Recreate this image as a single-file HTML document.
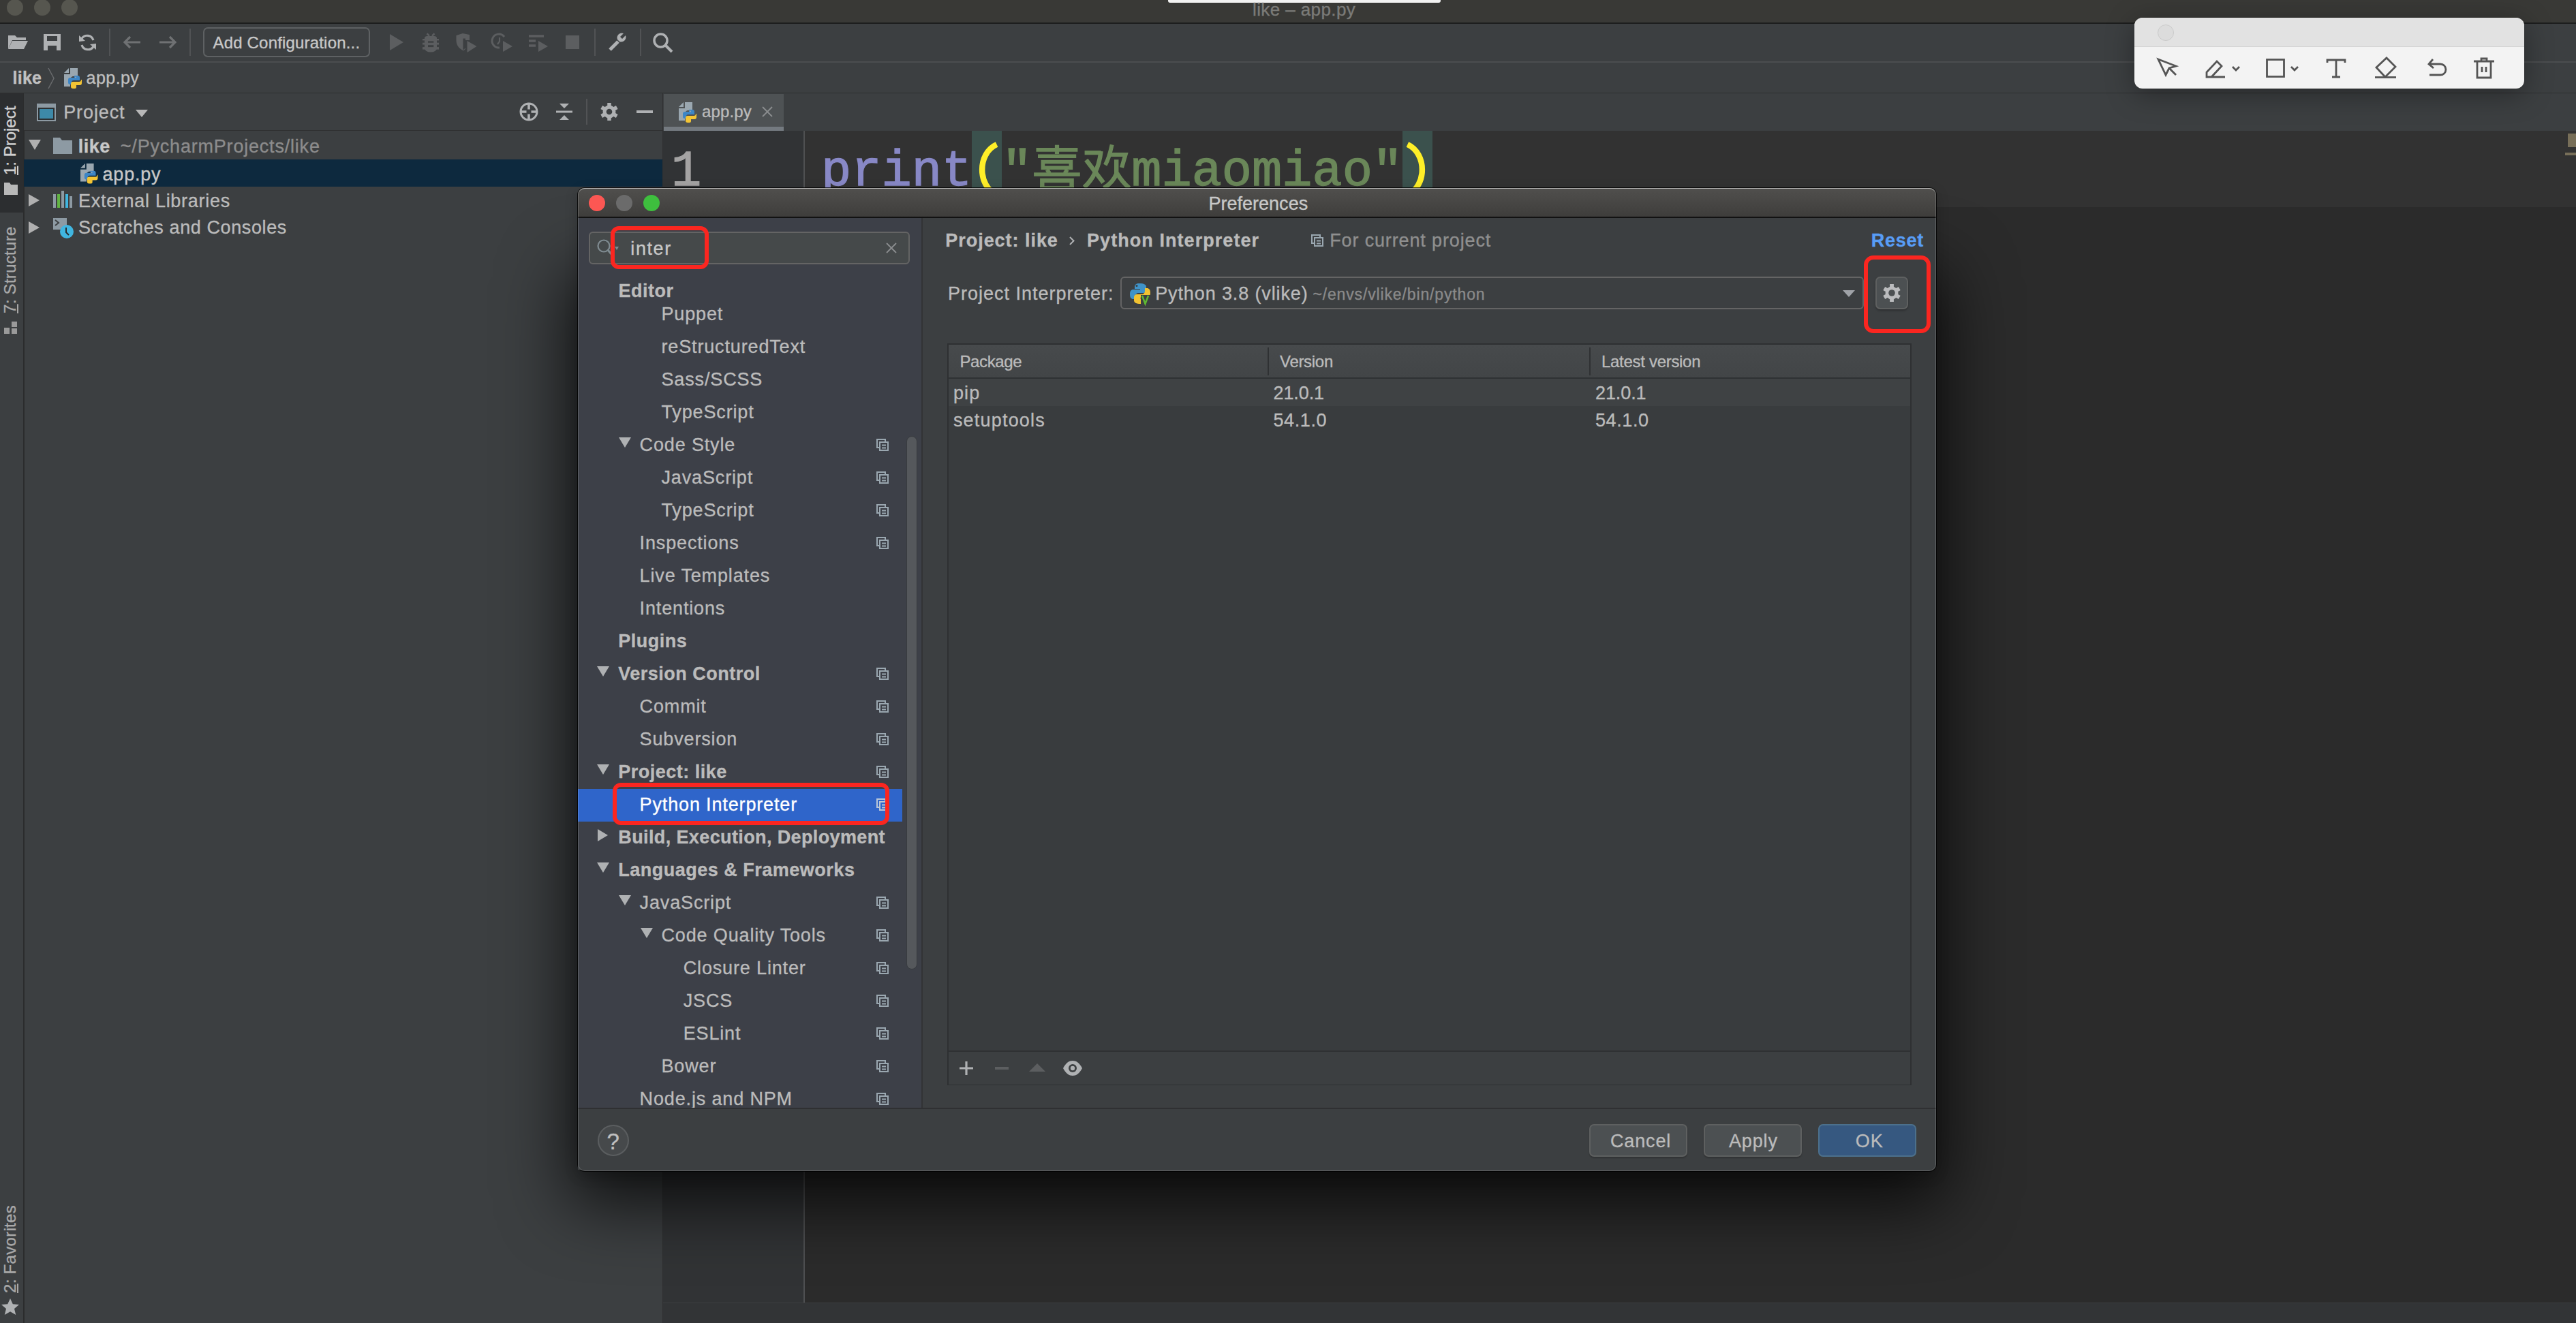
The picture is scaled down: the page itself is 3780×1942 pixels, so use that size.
<!DOCTYPE html>
<html><head><meta charset="utf-8">
<style>
*{margin:0;padding:0;box-sizing:border-box}
html,body{width:3780px;height:1942px;overflow:hidden;background:#3c3f41;font-family:"Liberation Sans",sans-serif;color:#bbbbbb;position:relative}
.a{position:absolute}
.t{position:absolute;white-space:pre;line-height:1;-webkit-text-stroke-width:0.35px}
svg{position:absolute;overflow:visible}
</style></head><body>
<div class="a" style="left:0px;top:0px;width:3780px;height:34px;background:#393936;"></div>
<div class="a" style="left:0px;top:33px;width:3780px;height:2px;background:#1d1e1e;"></div>
<div class="a" style="left:10px;top:-1px;width:24px;height:24px;background:#56564f;border-radius:50%"></div>
<div class="a" style="left:50px;top:-1px;width:24px;height:24px;background:#56564f;border-radius:50%"></div>
<div class="a" style="left:90px;top:-1px;width:24px;height:24px;background:#56564f;border-radius:50%"></div>
<div class="a" style="left:1714px;top:0px;width:400px;height:4px;background:#f2f2f2;border-radius:0 0 3px 3px"></div>
<div class="t" style="left:1838.0px;top:0.99px;font-size:26px;font-weight:400;letter-spacing:0.4px;color:#7b7b78;">like – app.py</div>
<div class="a" style="left:0px;top:35px;width:3780px;height:55px;background:#3c3f41;"></div>
<div class="a" style="left:0px;top:90px;width:3780px;height:2px;background:#4b4d4f;"></div>
<svg style="left:12px;top:50px" width="30" height="24" viewBox="0 0 30 24"><path d="M0 2h10l3 3h13v4H6L0 22z" fill="#afb1b3"/><path d="M6 10h23l-6 12H0z" fill="#afb1b3"/></svg>
<svg style="left:64px;top:50px" width="25" height="24" viewBox="0 0 25 24"><path d="M0 0h25v24H0z M5 3v7h15V3z M6 17v7h13v-7z" fill="#afb1b3" fill-rule="evenodd"/></svg>
<svg style="left:116px;top:50px" width="25" height="25" viewBox="0 0 25 25"><path d="M21 9A9.5 9.5 0 0 0 4 6.5" stroke="#afb1b3" stroke-width="3.2" fill="none"/><path d="M0 2l0 9 9-1z" fill="#afb1b3"/><path d="M4 16a9.5 9.5 0 0 0 17 2.5" stroke="#afb1b3" stroke-width="3.2" fill="none"/><path d="M25 23l0-9-9 1z" fill="#afb1b3"/></svg>
<div class="a" style="left:160px;top:42px;width:2px;height:40px;background:#515355;"></div>
<svg style="left:180px;top:52px" width="27" height="20" viewBox="0 0 27 20"><path d="M26 10H3M11 2L3 10l8 8" stroke="#6f7173" stroke-width="3.2" fill="none"/></svg>
<svg style="left:234px;top:52px" width="27" height="20" viewBox="0 0 27 20"><path d="M0 10h23M15 2l8 8-8 8" stroke="#6f7173" stroke-width="3.2" fill="none"/></svg>
<div class="a" style="left:278px;top:42px;width:2px;height:40px;background:#515355;"></div>
<div class="a" style="left:298px;top:40px;width:245px;height:44px;background:transparent;border:2px solid #5e6163;border-radius:7px"></div>
<div class="t" style="left:312.5px;top:50.68px;font-size:24px;font-weight:400;letter-spacing:0.18px;color:#c8c8c8;">Add Configuration...</div>
<svg style="left:572px;top:50px" width="20" height="24" viewBox="0 0 20 24"><path d="M0 0l20 12L0 24z" fill="#5c5e60"/></svg>
<svg style="left:619px;top:48px" width="26" height="30" viewBox="0 0 26 30"><path d="M7.5 1.3L11 4.6M18.5 1.3L15 4.6" stroke="#5c5e60" stroke-width="2.6"/><path d="M4 8a4 3 0 0 1 4-3h10a4 3 0 0 1 4 3v15a9 5.5 0 0 1-18 0z" fill="#5c5e60"/><rect x="1" y="9" width="24" height="2.4" fill="#5c5e60"/><rect x="1" y="14.7" width="24" height="2.9" fill="#5c5e60"/><rect x="1" y="21.1" width="24" height="3.5" fill="#5c5e60"/><rect x="9" y="12.4" width="8.3" height="2.3" fill="#3c3f41"/><rect x="9" y="18.2" width="8.3" height="2.9" fill="#3c3f41"/></svg>
<svg style="left:669px;top:49px" width="31" height="29" viewBox="0 0 31 29"><path d="M0.5 3L10 0l10 2v8h-6v13l-3 2.5C4 22 0.5 17 0.5 10z" fill="#5c5e60"/><path d="M10.5 7.5h3.5v14l-3.5 3z" fill="#3c3f41"/><path d="M16.5 11l14 8-14 9z" fill="#5c5e60"/></svg>
<svg style="left:722px;top:48px" width="30" height="28" viewBox="0 0 30 28"><path d="M18 6A10 10 0 1 0 11 22" stroke="#5c5e60" stroke-width="3" fill="none"/><path d="M11 7v6l-3 4" stroke="#5c5e60" stroke-width="2.2" fill="none"/><path d="M16 12l14 8-14 8z" fill="#5c5e60"/></svg>
<svg style="left:776px;top:48px" width="28" height="28" viewBox="0 0 28 28"><path d="M0 5h22M0 12h10M0 19h10" stroke="#5c5e60" stroke-width="3.5"/><path d="M14 12l14 8-14 8z" fill="#5c5e60"/></svg>
<div class="a" style="left:830px;top:52px;width:20px;height:20px;background:#5c5e60;"></div>
<div class="a" style="left:872px;top:42px;width:2px;height:40px;background:#515355;"></div>
<svg style="left:893px;top:48px" width="28" height="28" viewBox="0 0 28 28"><path d="M2 25L14 13" stroke="#afb1b3" stroke-width="5"/><path d="M22 1a7 7 0 0 0-9 9l3 3a7 7 0 0 0 9-9l-5 5-3-3z" fill="#afb1b3"/></svg>
<div class="a" style="left:939px;top:42px;width:2px;height:40px;background:#515355;"></div>
<svg style="left:958px;top:48px" width="29" height="29" viewBox="0 0 29 29"><circle cx="11.5" cy="11.5" r="9.5" stroke="#afb1b3" stroke-width="3.5" fill="none"/><path d="M18 18l10 10" stroke="#afb1b3" stroke-width="4"/></svg>
<div class="a" style="left:0px;top:92px;width:3780px;height:44px;background:#3c3f41;"></div>
<div class="a" style="left:0px;top:136px;width:3780px;height:1px;background:#2e2f30;"></div>
<div class="t" style="left:18.4px;top:102.14px;font-size:25px;font-weight:700;letter-spacing:0.3px;color:#c0c0c0;">like</div>
<svg style="left:70px;top:100px" width="10" height="30" viewBox="0 0 10 30"><path d="M1 0l8 15-8 15" stroke="#6a6c6e" stroke-width="1.5" fill="none"/></svg>
<svg style="left:94px;top:100px" width="28" height="31" viewBox="0 0 28 31"><g transform="scale(1)"><path d="M0 7L7 0v7z" fill="#9aa7b0"/><path d="M9 0h11v12h-6a5 5 0 0 0-5 5v10H0V9h9z" fill="#9aa7b0"/><path d="M15 11h5a3 3 0 0 1 3 3v4h-9a3 3 0 0 0-3 3v3H9a3 3 0 0 1-3-3v-4a3 3 0 0 1 3-3h6z" fill="#3d86c6"/><circle cx="17" cy="13.5" r="1" fill="#9aa7b0"/><path d="M26 17v5a3 3 0 0 1-3 3h-5v3a2 2 0 0 1-2 2h-3a3 3 0 0 1-3-3v-4a3 3 0 0 1 3-3h9a3 3 0 0 0 3-3z" fill="#f4c534"/></g></svg>
<div class="t" style="left:126.6px;top:102.14px;font-size:25px;font-weight:400;letter-spacing:0.44px;color:#c0c0c0;">app.py</div>
<div class="a" style="left:0px;top:137px;width:35px;height:1775px;background:#3c3f41;"></div>
<div class="a" style="left:34px;top:137px;width:2px;height:1805px;background:#2b2c2d;"></div>
<div class="a" style="left:0px;top:137px;width:34px;height:175px;background:#2c2e30;"></div>
<div class="t" style="left:3px;top:257px;transform:rotate(-90deg);transform-origin:0 0;font-size:24px;letter-spacing:0px;color:#d0d0d0"><u style="text-decoration-thickness:1.5px;text-underline-offset:2px">1</u>: Project</div>
<svg style="left:6px;top:268px" width="20" height="18" viewBox="0 0 20 18"><path d="M0 0h8l2 3h10v15H0z" fill="#b8b8b8"/></svg>
<div class="t" style="left:3px;top:460px;transform:rotate(-90deg);transform-origin:0 0;font-size:24px;letter-spacing:0.3px;color:#a8a8a8"><u style="text-decoration-thickness:1.5px;text-underline-offset:2px">7</u>: Structure</div>
<svg style="left:6px;top:472px" width="20" height="18" viewBox="0 0 20 18"><rect x="0" y="9" width="8" height="9" fill="#9a9a9a"/><rect x="11" y="0" width="8" height="8" fill="#9a9a9a"/><rect x="11" y="10" width="8" height="8" fill="#9a9a9a"/></svg>
<div class="t" style="left:3px;top:1898px;transform:rotate(-90deg);transform-origin:0 0;font-size:24px;letter-spacing:0.3px;color:#a8a8a8"><u style="text-decoration-thickness:1.5px;text-underline-offset:2px">2</u>: Favorites</div>
<svg style="left:2px;top:1906px" width="26" height="24" viewBox="0 0 26 24"><path d="M13 0l3.8 8.3 9.2.8-7 6 2.2 8.9L13 19.3 4.8 24 7 15.1 0 9.1l9.2-.8z" fill="#afb1b3"/></svg>
<div class="a" style="left:35px;top:137px;width:937px;height:54px;background:#3c3f41;"></div>
<div class="a" style="left:35px;top:191px;width:937px;height:1px;background:#2f3031;"></div>
<svg style="left:54px;top:152px" width="28" height="26" viewBox="0 0 28 26"><rect x="0" y="0" width="28" height="26" fill="#8d9aa3"/><rect x="2" y="6" width="24" height="18" fill="#2d3032"/><rect x="4" y="8" width="20" height="14" fill="#3d89a8"/></svg>
<div class="t" style="left:93.2px;top:151.84px;font-size:27px;font-weight:400;letter-spacing:0.9px;color:#bbbbbb;">Project</div>
<svg style="left:199px;top:161px" width="18" height="11" viewBox="0 0 18 11"><path d="M0 0h18L9 11z" fill="#b8b8b8"/></svg>
<svg style="left:762px;top:150px" width="28" height="28" viewBox="0 0 28 28"><circle cx="14" cy="14" r="12" stroke="#afb1b3" stroke-width="3" fill="none"/><path d="M14 1v9.5M14 17.5v9.5M1 14h9.5M17.5 14h9.5" stroke="#afb1b3" stroke-width="3.6"/></svg>
<svg style="left:816px;top:152px" width="24" height="24" viewBox="0 0 24 24"><path d="M0 12h24" stroke="#afb1b3" stroke-width="3"/><path d="M5 0h14l-7 7z M5 24h14l-7-7z" fill="#afb1b3"/></svg>
<div class="a" style="left:860px;top:145px;width:2px;height:38px;background:#515355;"></div>
<svg style="left:881px;top:151px" width="26" height="26" viewBox="0 0 26 26"><circle cx="13" cy="13" r="9.5" fill="#afb1b3"/><rect x="-2.75" y="-13" width="5.5" height="13" fill="#afb1b3" transform="translate(13 13) rotate(0)"/><rect x="-2.75" y="-13" width="5.5" height="13" fill="#afb1b3" transform="translate(13 13) rotate(60)"/><rect x="-2.75" y="-13" width="5.5" height="13" fill="#afb1b3" transform="translate(13 13) rotate(120)"/><rect x="-2.75" y="-13" width="5.5" height="13" fill="#afb1b3" transform="translate(13 13) rotate(180)"/><rect x="-2.75" y="-13" width="5.5" height="13" fill="#afb1b3" transform="translate(13 13) rotate(240)"/><rect x="-2.75" y="-13" width="5.5" height="13" fill="#afb1b3" transform="translate(13 13) rotate(300)"/><circle cx="13" cy="13" r="4.3" fill="#3c3f41"/></svg>
<div class="a" style="left:934px;top:162px;width:24px;height:4px;background:#afb1b3;"></div>
<div class="a" style="left:972px;top:137px;width:1px;height:1805px;background:#2f3031;"></div>
<div class="a" style="left:35px;top:234px;width:937px;height:40px;background:#0d293e;"></div>
<svg style="left:42px;top:205px" width="18" height="15" viewBox="0 0 18 15"><path d="M0 0h18L9 15z" fill="#b0b0b0"/></svg>
<svg style="left:78px;top:202px" width="28" height="24" viewBox="0 0 28 24"><path d="M0 0h10l3 4h15v20H0z" fill="#8d9aa3"/></svg>
<div class="t" style="left:114.7px;top:201.84px;font-size:27px;font-weight:700;letter-spacing:0.5px;color:#c8c8c8;">like</div>
<div class="t" style="left:176.8px;top:201.84px;font-size:27px;font-weight:400;letter-spacing:0.8px;color:#8c8c8c;">~/PycharmProjects/like</div>
<svg style="left:118px;top:240px" width="27" height="30" viewBox="0 0 27 30"><g transform="scale(0.98)"><path d="M0 7L7 0v7z" fill="#9aa7b0"/><path d="M9 0h11v12h-6a5 5 0 0 0-5 5v10H0V9h9z" fill="#9aa7b0"/><path d="M15 11h5a3 3 0 0 1 3 3v4h-9a3 3 0 0 0-3 3v3H9a3 3 0 0 1-3-3v-4a3 3 0 0 1 3-3h6z" fill="#3d86c6"/><circle cx="17" cy="13.5" r="1" fill="#9aa7b0"/><path d="M26 17v5a3 3 0 0 1-3 3h-5v3a2 2 0 0 1-2 2h-3a3 3 0 0 1-3-3v-4a3 3 0 0 1 3-3h9a3 3 0 0 0 3-3z" fill="#f4c534"/></g></svg>
<div class="t" style="left:150.5px;top:242.84px;font-size:27px;font-weight:400;letter-spacing:0.8px;color:#c8c8c8;">app.py</div>
<svg style="left:42px;top:285px" width="16" height="18" viewBox="0 0 16 18"><path d="M0 0l16 9L0 18z" fill="#b0b0b0"/></svg>
<svg style="left:78px;top:280px" width="28" height="25" viewBox="0 0 28 25"><rect x="0" y="5" width="4" height="20" fill="#8d9aa3"/><rect x="6" y="5" width="4" height="20" fill="#62b543"/><rect x="12" y="0" width="4" height="25" fill="#8d9aa3"/><rect x="18" y="5" width="4" height="20" fill="#40b6e0"/><rect x="24" y="8" width="4" height="17" fill="#8d9aa3"/></svg>
<div class="t" style="left:115.0px;top:281.84px;font-size:27px;font-weight:400;letter-spacing:0.71px;color:#bbbbbb;">External Libraries</div>
<svg style="left:42px;top:325px" width="16" height="18" viewBox="0 0 16 18"><path d="M0 0l16 9L0 18z" fill="#b0b0b0"/></svg>
<svg style="left:78px;top:320px" width="32" height="32" viewBox="0 0 32 32"><rect x="0" y="0" width="20" height="17" fill="#8d9aa3"/><path d="M3 3l5 4-5 4" stroke="#3c3f41" stroke-width="2" fill="none"/><circle cx="20" cy="20" r="10" fill="#40b6e0"/><path d="M19 14v7l4 4" stroke="#2b2b2b" stroke-width="2" fill="none"/></svg>
<div class="t" style="left:115.0px;top:321.44px;font-size:27px;font-weight:400;letter-spacing:0.6px;color:#bbbbbb;">Scratches and Consoles</div>
<div class="a" style="left:973px;top:137px;width:2807px;height:55px;background:#3c3f41;"></div>
<div class="a" style="left:974px;top:138px;width:176px;height:48px;background:#4e5254;"></div>
<div class="a" style="left:974px;top:186px;width:176px;height:6px;background:#747a80;"></div>
<svg style="left:996px;top:150px" width="28" height="31" viewBox="0 0 28 31"><g transform="scale(1)"><path d="M0 7L7 0v7z" fill="#9aa7b0"/><path d="M9 0h11v12h-6a5 5 0 0 0-5 5v10H0V9h9z" fill="#9aa7b0"/><path d="M15 11h5a3 3 0 0 1 3 3v4h-9a3 3 0 0 0-3 3v3H9a3 3 0 0 1-3-3v-4a3 3 0 0 1 3-3h6z" fill="#3d86c6"/><circle cx="17" cy="13.5" r="1" fill="#9aa7b0"/><path d="M26 17v5a3 3 0 0 1-3 3h-5v3a2 2 0 0 1-2 2h-3a3 3 0 0 1-3-3v-4a3 3 0 0 1 3-3h9a3 3 0 0 0 3-3z" fill="#f4c534"/></g></svg>
<div class="t" style="left:1030.0px;top:152.38px;font-size:24px;font-weight:400;letter-spacing:0.14px;color:#bbbbbb;">app.py</div>
<svg style="left:1119px;top:157px" width="14" height="14" viewBox="0 0 14 14"><path d="M0 0l14 14M14 0L0 14" stroke="#8b8d8f" stroke-width="1.8"/></svg>
<div class="a" style="left:973px;top:192px;width:207px;height:1720px;background:#313335;"></div>
<div class="a" style="left:1180px;top:192px;width:2600px;height:1720px;background:#2b2b2b;"></div>
<div class="a" style="left:1181px;top:192px;width:2599px;height:112px;background:#323232;"></div>
<div class="a" style="left:1179px;top:192px;width:2px;height:1720px;background:#4f5052;"></div>
<div class="a" style="left:973px;top:1912px;width:2807px;height:30px;background:#323436;"></div>
<div class="a" style="left:973px;top:1912px;width:2807px;height:1px;background:#3d3f41;"></div>
<div class="a" style="left:3768px;top:196px;width:12px;height:20px;background:#776e58;"></div>
<div class="a" style="left:3764px;top:224px;width:16px;height:4px;background:#776e58;"></div>
<div class="a" style="left:1426px;top:192px;width:44px;height:84px;background:#3b514d;"></div>
<div class="a" style="left:2058px;top:192px;width:44px;height:84px;background:#3b514d;"></div>
<div class="t" style="left:1205px;top:215.6px;font-family:&quot;Liberation Mono&quot;,monospace;font-size:73.7px;letter-spacing:0px;color:#8888c6;-webkit-text-stroke:1.4px #8888c6">print</div>
<svg style="left:1426px;top:200px" width="44" height="76" viewBox="0 0 44 76"><path d="M36.6 12C8 25 8 73 36.6 86" stroke="#ffef28" stroke-width="8.5" fill="none"/></svg>
<div class="t" style="left:1470.2px;top:215.6px;font-family:&quot;Liberation Mono&quot;,monospace;font-size:73.7px;letter-spacing:0px;color:#6a8759;-webkit-text-stroke:1.4px #6a8759">"</div>
<div class="t" style="left:1660.2px;top:215.6px;font-family:&quot;Liberation Mono&quot;,monospace;font-size:73.7px;letter-spacing:0px;color:#6a8759;-webkit-text-stroke:1.4px #6a8759">miaomiao"</div>
<svg style="left:2058px;top:200px" width="44" height="76" viewBox="0 0 44 76"><path d="M7.4 12C36 25 36 73 7.4 86" stroke="#ffef28" stroke-width="8.5" fill="none"/></svg>
<div class="t" style="left:985px;top:215.6px;font-family:&quot;Liberation Mono&quot;,monospace;font-size:73.7px;letter-spacing:0px;color:#a4a3a3;-webkit-text-stroke:1.4px #a4a3a3">1</div>
<svg style="left:1505px;top:200px" width="160" height="76" viewBox="0 0 160 76"><g stroke="#6a8759" fill="none" stroke-linecap="butt"><path d="M46 12.7V26" stroke-width="6.2"/><path d="M15.5 19.9H76.4M18 29.2H74.2" stroke-width="5.6"/><rect x="25.4" y="37.6" width="41" height="8.7" stroke-width="5.6"/><path d="M31.5 49l3.5 5.5M61 49l-3.5 5.5" stroke-width="6"/><path d="M12.1 56H79.8" stroke-width="5.4"/><path d="M24.3 84V65H67.6V84" stroke-width="6.4"/><path d="M21 75.8H71" stroke-width="5"/><path d="M86.6 24.2H110.5" stroke-width="6.2"/><path d="M110.5 22C108 45 100 62 86 75" stroke-width="6.5"/><path d="M88.8 34.8L114 68" stroke-width="6.5"/><path d="M126.7 12.4C124 25 121 35 116.8 42.2" stroke-width="6"/><path d="M124.2 27H146.5L141 46" stroke-width="6.2"/><path d="M133.2 34.2V55C130 64 123 71 114.9 76" stroke-width="6.5"/><path d="M134 54C139 63 145 70 152 76" stroke-width="6.5"/></g></svg>
<div class="a" style="left:853px;top:386px;width:1983px;height:1333px;border-radius:10px;box-shadow:0 30px 100px 18px rgba(0,0,0,.75)"></div>
<div class="a" style="left:848px;top:276px;width:1993px;height:1443px;background:#3c3f41;border-radius:10px;box-shadow:0 0 0 1px rgba(0,0,0,.8), 0 6px 20px rgba(0,0,0,.2);overflow:hidden"></div>
<div class="a" style="left:848px;top:276px;width:1993px;height:43px;background:linear-gradient(#504f4d,#3e3d3b);border-radius:10px 10px 0 0;border-top:1.5px solid #8d8c8a"></div>
<div class="a" style="left:848px;top:318px;width:1993px;height:2px;background:#121212;"></div>
<div class="a" style="left:864px;top:286px;width:24px;height:24px;background:#fc5753;border-radius:50%"></div>
<div class="a" style="left:904px;top:286px;width:24px;height:24px;background:#6b6b6b;border-radius:50%"></div>
<div class="a" style="left:944px;top:286px;width:24px;height:24px;background:#3ebf3e;border-radius:50%"></div>
<div class="t" style="left:1773.4px;top:285.94px;font-size:27px;font-weight:400;letter-spacing:0.02px;color:#c8c8c8;">Preferences</div>
<div class="a" style="left:848px;top:320px;width:504px;height:1306px;background:#3d4048;"></div>
<div class="a" style="left:1352px;top:320px;width:2px;height:1306px;background:#323335;"></div>
<div class="a" style="left:848px;top:1626px;width:1993px;height:2px;background:#2f3032;"></div>
<div class="a" style="left:864px;top:340px;width:471px;height:48px;background:#45494a;border:2px solid #646464;border-radius:6px"></div>
<svg style="left:876px;top:351px" width="34" height="24" viewBox="0 0 34 24"><circle cx="10" cy="10" r="8.5" stroke="#7f8b91" stroke-width="2.2" fill="none"/><path d="M16 16l5 6" stroke="#7f8b91" stroke-width="3"/><path d="M26 11h6l-3 5z" fill="#7f8b91"/></svg>
<div class="t" style="left:925.3px;top:352.04px;font-size:27px;font-weight:400;letter-spacing:1.6px;color:#c8c8c8;">inter</div>
<svg style="left:1301px;top:357px" width="14" height="14" viewBox="0 0 14 14"><path d="M0 0l14 14M14 0L0 14" stroke="#8b8d8f" stroke-width="1.8"/></svg>
<div class="t" style="left:907.5px;top:414.14px;font-size:27px;font-weight:700;letter-spacing:0.52px;color:#bbbbbb;">Editor</div>
<div class="a" style="left:848px;top:1158px;width:476px;height:48px;background:#2f65ca;"></div>
<div class="t" style="left:970.5px;top:448.14px;font-size:27px;font-weight:400;letter-spacing:0.85px;color:#bbbbbb;">Puppet</div>
<div class="t" style="left:970.5px;top:496.14px;font-size:27px;font-weight:400;letter-spacing:0.85px;color:#bbbbbb;">reStructuredText</div>
<div class="t" style="left:970.5px;top:544.14px;font-size:27px;font-weight:400;letter-spacing:0.85px;color:#bbbbbb;">Sass/SCSS</div>
<div class="t" style="left:970.5px;top:592.14px;font-size:27px;font-weight:400;letter-spacing:0.85px;color:#bbbbbb;">TypeScript</div>
<div class="t" style="left:938.6px;top:640.14px;font-size:27px;font-weight:400;letter-spacing:0.85px;color:#bbbbbb;">Code Style</div>
<svg style="left:908px;top:642px" width="18" height="15" viewBox="0 0 18 15"><path d="M0 0h18L9 15z" fill="#afb1b3"/></svg>
<svg style="left:1286px;top:644px" width="18" height="18" viewBox="0 0 18 18"><rect x="1" y="1" width="12" height="12" stroke="#9aa7b0" stroke-width="2" fill="none"/><rect x="5" y="5" width="12" height="12" stroke="#9aa7b0" stroke-width="2" fill="#3d4048"/><path d="M8 9.5h6M8 13.5h6" stroke="#9aa7b0" stroke-width="2"/></svg>
<div class="t" style="left:970.5px;top:688.14px;font-size:27px;font-weight:400;letter-spacing:0.85px;color:#bbbbbb;">JavaScript</div>
<svg style="left:1286px;top:692px" width="18" height="18" viewBox="0 0 18 18"><rect x="1" y="1" width="12" height="12" stroke="#9aa7b0" stroke-width="2" fill="none"/><rect x="5" y="5" width="12" height="12" stroke="#9aa7b0" stroke-width="2" fill="#3d4048"/><path d="M8 9.5h6M8 13.5h6" stroke="#9aa7b0" stroke-width="2"/></svg>
<div class="t" style="left:970.5px;top:736.14px;font-size:27px;font-weight:400;letter-spacing:0.85px;color:#bbbbbb;">TypeScript</div>
<svg style="left:1286px;top:740px" width="18" height="18" viewBox="0 0 18 18"><rect x="1" y="1" width="12" height="12" stroke="#9aa7b0" stroke-width="2" fill="none"/><rect x="5" y="5" width="12" height="12" stroke="#9aa7b0" stroke-width="2" fill="#3d4048"/><path d="M8 9.5h6M8 13.5h6" stroke="#9aa7b0" stroke-width="2"/></svg>
<div class="t" style="left:938.6px;top:784.14px;font-size:27px;font-weight:400;letter-spacing:0.85px;color:#bbbbbb;">Inspections</div>
<svg style="left:1286px;top:788px" width="18" height="18" viewBox="0 0 18 18"><rect x="1" y="1" width="12" height="12" stroke="#9aa7b0" stroke-width="2" fill="none"/><rect x="5" y="5" width="12" height="12" stroke="#9aa7b0" stroke-width="2" fill="#3d4048"/><path d="M8 9.5h6M8 13.5h6" stroke="#9aa7b0" stroke-width="2"/></svg>
<div class="t" style="left:938.6px;top:832.14px;font-size:27px;font-weight:400;letter-spacing:0.85px;color:#bbbbbb;">Live Templates</div>
<div class="t" style="left:938.6px;top:880.14px;font-size:27px;font-weight:400;letter-spacing:0.85px;color:#bbbbbb;">Intentions</div>
<div class="t" style="left:907.3px;top:928.14px;font-size:27px;font-weight:700;letter-spacing:0.5px;color:#bbbbbb;">Plugins</div>
<div class="t" style="left:907.3px;top:976.14px;font-size:27px;font-weight:700;letter-spacing:0.5px;color:#bbbbbb;">Version Control</div>
<svg style="left:876px;top:978px" width="18" height="15" viewBox="0 0 18 15"><path d="M0 0h18L9 15z" fill="#afb1b3"/></svg>
<svg style="left:1286px;top:980px" width="18" height="18" viewBox="0 0 18 18"><rect x="1" y="1" width="12" height="12" stroke="#9aa7b0" stroke-width="2" fill="none"/><rect x="5" y="5" width="12" height="12" stroke="#9aa7b0" stroke-width="2" fill="#3d4048"/><path d="M8 9.5h6M8 13.5h6" stroke="#9aa7b0" stroke-width="2"/></svg>
<div class="t" style="left:938.6px;top:1024.14px;font-size:27px;font-weight:400;letter-spacing:0.85px;color:#bbbbbb;">Commit</div>
<svg style="left:1286px;top:1028px" width="18" height="18" viewBox="0 0 18 18"><rect x="1" y="1" width="12" height="12" stroke="#9aa7b0" stroke-width="2" fill="none"/><rect x="5" y="5" width="12" height="12" stroke="#9aa7b0" stroke-width="2" fill="#3d4048"/><path d="M8 9.5h6M8 13.5h6" stroke="#9aa7b0" stroke-width="2"/></svg>
<div class="t" style="left:938.6px;top:1072.14px;font-size:27px;font-weight:400;letter-spacing:0.85px;color:#bbbbbb;">Subversion</div>
<svg style="left:1286px;top:1076px" width="18" height="18" viewBox="0 0 18 18"><rect x="1" y="1" width="12" height="12" stroke="#9aa7b0" stroke-width="2" fill="none"/><rect x="5" y="5" width="12" height="12" stroke="#9aa7b0" stroke-width="2" fill="#3d4048"/><path d="M8 9.5h6M8 13.5h6" stroke="#9aa7b0" stroke-width="2"/></svg>
<div class="t" style="left:907.3px;top:1120.14px;font-size:27px;font-weight:700;letter-spacing:0.5px;color:#bbbbbb;">Project: like</div>
<svg style="left:876px;top:1122px" width="18" height="15" viewBox="0 0 18 15"><path d="M0 0h18L9 15z" fill="#afb1b3"/></svg>
<svg style="left:1286px;top:1124px" width="18" height="18" viewBox="0 0 18 18"><rect x="1" y="1" width="12" height="12" stroke="#9aa7b0" stroke-width="2" fill="none"/><rect x="5" y="5" width="12" height="12" stroke="#9aa7b0" stroke-width="2" fill="#3d4048"/><path d="M8 9.5h6M8 13.5h6" stroke="#9aa7b0" stroke-width="2"/></svg>
<div class="t" style="left:938.6px;top:1168.14px;font-size:27px;font-weight:400;letter-spacing:0.85px;color:#ffffff;">Python Interpreter</div>
<svg style="left:1286px;top:1172px" width="18" height="18" viewBox="0 0 18 18"><rect x="1" y="1" width="12" height="12" stroke="#b9c6d8" stroke-width="2" fill="none"/><rect x="5" y="5" width="12" height="12" stroke="#b9c6d8" stroke-width="2" fill="#2f65ca"/><path d="M8 9.5h6M8 13.5h6" stroke="#b9c6d8" stroke-width="2"/></svg>
<div class="t" style="left:907.3px;top:1216.14px;font-size:27px;font-weight:700;letter-spacing:0.38px;color:#bbbbbb;">Build, Execution, Deployment</div>
<svg style="left:877px;top:1217px" width="15" height="18" viewBox="0 0 15 18"><path d="M0 0l15 9L0 18z" fill="#afb1b3"/></svg>
<div class="t" style="left:907.3px;top:1264.14px;font-size:27px;font-weight:700;letter-spacing:0.5px;color:#bbbbbb;">Languages &amp; Frameworks</div>
<svg style="left:876px;top:1266px" width="18" height="15" viewBox="0 0 18 15"><path d="M0 0h18L9 15z" fill="#afb1b3"/></svg>
<div class="t" style="left:938.6px;top:1312.14px;font-size:27px;font-weight:400;letter-spacing:0.85px;color:#bbbbbb;">JavaScript</div>
<svg style="left:908px;top:1314px" width="18" height="15" viewBox="0 0 18 15"><path d="M0 0h18L9 15z" fill="#afb1b3"/></svg>
<svg style="left:1286px;top:1316px" width="18" height="18" viewBox="0 0 18 18"><rect x="1" y="1" width="12" height="12" stroke="#9aa7b0" stroke-width="2" fill="none"/><rect x="5" y="5" width="12" height="12" stroke="#9aa7b0" stroke-width="2" fill="#3d4048"/><path d="M8 9.5h6M8 13.5h6" stroke="#9aa7b0" stroke-width="2"/></svg>
<div class="t" style="left:970.5px;top:1360.14px;font-size:27px;font-weight:400;letter-spacing:0.85px;color:#bbbbbb;">Code Quality Tools</div>
<svg style="left:940px;top:1362px" width="18" height="15" viewBox="0 0 18 15"><path d="M0 0h18L9 15z" fill="#afb1b3"/></svg>
<svg style="left:1286px;top:1364px" width="18" height="18" viewBox="0 0 18 18"><rect x="1" y="1" width="12" height="12" stroke="#9aa7b0" stroke-width="2" fill="none"/><rect x="5" y="5" width="12" height="12" stroke="#9aa7b0" stroke-width="2" fill="#3d4048"/><path d="M8 9.5h6M8 13.5h6" stroke="#9aa7b0" stroke-width="2"/></svg>
<div class="t" style="left:1002.7px;top:1408.14px;font-size:27px;font-weight:400;letter-spacing:0.85px;color:#bbbbbb;">Closure Linter</div>
<svg style="left:1286px;top:1412px" width="18" height="18" viewBox="0 0 18 18"><rect x="1" y="1" width="12" height="12" stroke="#9aa7b0" stroke-width="2" fill="none"/><rect x="5" y="5" width="12" height="12" stroke="#9aa7b0" stroke-width="2" fill="#3d4048"/><path d="M8 9.5h6M8 13.5h6" stroke="#9aa7b0" stroke-width="2"/></svg>
<div class="t" style="left:1002.7px;top:1456.14px;font-size:27px;font-weight:400;letter-spacing:0.85px;color:#bbbbbb;">JSCS</div>
<svg style="left:1286px;top:1460px" width="18" height="18" viewBox="0 0 18 18"><rect x="1" y="1" width="12" height="12" stroke="#9aa7b0" stroke-width="2" fill="none"/><rect x="5" y="5" width="12" height="12" stroke="#9aa7b0" stroke-width="2" fill="#3d4048"/><path d="M8 9.5h6M8 13.5h6" stroke="#9aa7b0" stroke-width="2"/></svg>
<div class="t" style="left:1002.7px;top:1504.14px;font-size:27px;font-weight:400;letter-spacing:0.85px;color:#bbbbbb;">ESLint</div>
<svg style="left:1286px;top:1508px" width="18" height="18" viewBox="0 0 18 18"><rect x="1" y="1" width="12" height="12" stroke="#9aa7b0" stroke-width="2" fill="none"/><rect x="5" y="5" width="12" height="12" stroke="#9aa7b0" stroke-width="2" fill="#3d4048"/><path d="M8 9.5h6M8 13.5h6" stroke="#9aa7b0" stroke-width="2"/></svg>
<div class="t" style="left:970.5px;top:1552.14px;font-size:27px;font-weight:400;letter-spacing:0.85px;color:#bbbbbb;">Bower</div>
<svg style="left:1286px;top:1556px" width="18" height="18" viewBox="0 0 18 18"><rect x="1" y="1" width="12" height="12" stroke="#9aa7b0" stroke-width="2" fill="none"/><rect x="5" y="5" width="12" height="12" stroke="#9aa7b0" stroke-width="2" fill="#3d4048"/><path d="M8 9.5h6M8 13.5h6" stroke="#9aa7b0" stroke-width="2"/></svg>
<div class="t" style="left:938.6px;top:1600.14px;font-size:27px;font-weight:400;letter-spacing:0.85px;color:#bbbbbb;">Node.js and NPM</div>
<svg style="left:1286px;top:1604px" width="18" height="18" viewBox="0 0 18 18"><rect x="1" y="1" width="12" height="12" stroke="#9aa7b0" stroke-width="2" fill="none"/><rect x="5" y="5" width="12" height="12" stroke="#9aa7b0" stroke-width="2" fill="#3d4048"/><path d="M8 9.5h6M8 13.5h6" stroke="#9aa7b0" stroke-width="2"/></svg>
<div class="a" style="left:848px;top:1626px;width:504px;height:91px;background:#3c3f41;"></div>
<div class="a" style="left:848px;top:1626px;width:1993px;height:2px;background:#2f3032;"></div>
<div class="a" style="left:1330px;top:640px;width:16px;height:783px;background:#55585c;border-radius:8px;border:1px solid #383b3f"></div>
<div class="a" style="left:896px;top:332px;width:144px;height:63px;background:transparent;border:6px solid #fb2620;border-radius:12px"></div>
<div class="a" style="left:899px;top:1149px;width:406px;height:62px;background:transparent;border:6px solid #fb2620;border-radius:12px"></div>
<div class="t" style="left:1387.3px;top:340.14px;font-size:27px;font-weight:700;letter-spacing:0.96px;color:#bbbbbb;">Project: like</div>
<svg style="left:1569px;top:347px" width="8" height="13" viewBox="0 0 8 13"><path d="M1 1l5.5 5.5L1 12" stroke="#afb1b3" stroke-width="2" fill="none"/></svg>
<div class="t" style="left:1595.0px;top:340.14px;font-size:27px;font-weight:700;letter-spacing:1.06px;color:#bbbbbb;">Python Interpreter</div>
<svg style="left:1924px;top:344px" width="18" height="18" viewBox="0 0 18 18"><rect x="1" y="1" width="12" height="12" stroke="#9aa7b0" stroke-width="2" fill="none"/><rect x="5" y="5" width="12" height="12" stroke="#9aa7b0" stroke-width="2" fill="#3c3f41"/><path d="M8 9.5h6M8 13.5h6" stroke="#9aa7b0" stroke-width="2"/></svg>
<div class="t" style="left:1951.2px;top:340.14px;font-size:27px;font-weight:400;letter-spacing:0.86px;color:#8f8f8f;">For current project</div>
<div class="t" style="left:2745.7px;top:340.14px;font-size:27px;font-weight:700;letter-spacing:0.73px;color:#589df6;">Reset</div>
<div class="t" style="left:1391.0px;top:417.94px;font-size:27px;font-weight:400;letter-spacing:1.0px;color:#bbbbbb;">Project Interpreter:</div>
<div class="a" style="left:1644px;top:406px;width:1091px;height:48px;background:transparent;border:2px solid #646464;border-radius:6px"></div>
<svg style="left:1658px;top:416px" width="32" height="32" viewBox="0 0 32 32"><path d="M14 0c-5 0-7 2-7 5v3h8v1H5c-3 0-5 2-5 7s2 7 5 7h3v-4c0-3 2-5 5-5h7c2 0 4-2 4-4V5c0-3-3-5-10-5z" fill="#3f93c9"/><circle cx="10" cy="3.5" r="1.5" fill="#3c3f41"/><path d="M16 30c5 0 7-2 7-5v-3h-8v-1h10c3 0 5-2 5-7s-2-7-5-7h-3v4c0 3-2 5-5 5h-7c-2 0-4 2-4 4v5c0 3 3 5 10 5z" fill="#f1c232"/><rect x="16" y="17" width="14" height="15" fill="#3c3f41"/><path d="M18 18l4.5 12L27 18" stroke="#5fb832" stroke-width="2.5" fill="none"/></svg>
<div class="t" style="left:1695.2px;top:417.94px;font-size:27px;font-weight:400;letter-spacing:0.88px;color:#bbbbbb;">Python 3.8 (vlike)</div>
<div class="t" style="left:1926.4px;top:421.13px;font-size:23px;font-weight:400;letter-spacing:0.86px;color:#8a8a8a;">~/envs/vlike/bin/python</div>
<svg style="left:2704px;top:426px" width="18" height="10" viewBox="0 0 18 10"><path d="M0 0h18L9 10z" fill="#a0a3a8"/></svg>
<div class="a" style="left:2752px;top:406px;width:48px;height:48px;background:#4c5052;border:2px solid #5e6060;border-radius:7px;box-shadow:0 2px 3px rgba(0,0,0,.25)"></div>
<svg style="left:2763px;top:417px" width="26" height="26" viewBox="0 0 26 26"><circle cx="13" cy="13" r="9.5" fill="#bbbcbe"/><rect x="-2.9" y="-13" width="5.8" height="13" fill="#bbbcbe" transform="translate(13 13) rotate(0)"/><rect x="-2.9" y="-13" width="5.8" height="13" fill="#bbbcbe" transform="translate(13 13) rotate(60)"/><rect x="-2.9" y="-13" width="5.8" height="13" fill="#bbbcbe" transform="translate(13 13) rotate(120)"/><rect x="-2.9" y="-13" width="5.8" height="13" fill="#bbbcbe" transform="translate(13 13) rotate(180)"/><rect x="-2.9" y="-13" width="5.8" height="13" fill="#bbbcbe" transform="translate(13 13) rotate(240)"/><rect x="-2.9" y="-13" width="5.8" height="13" fill="#bbbcbe" transform="translate(13 13) rotate(300)"/><circle cx="13" cy="13" r="4.8" fill="#4c5052"/></svg>
<div class="a" style="left:2735px;top:375px;width:98px;height:114px;background:transparent;border:6px solid #fb2620;border-radius:14px"></div>
<div class="a" style="left:1390px;top:504px;width:1415px;height:1089px;background:#393c3e;border:2px solid #2e3032"></div>
<div class="a" style="left:1392px;top:506px;width:1411px;height:49px;background:linear-gradient(#474a4c,#424547);"></div>
<div class="a" style="left:1392px;top:554px;width:1411px;height:2px;background:#2f3133;"></div>
<div class="a" style="left:1860px;top:510px;width:2px;height:41px;background:#2f3133;"></div>
<div class="a" style="left:2332px;top:510px;width:2px;height:41px;background:#2f3133;"></div>
<div class="t" style="left:1408.5px;top:518.78px;font-size:24px;font-weight:400;letter-spacing:-0.4px;color:#bbbbbb;">Package</div>
<div class="t" style="left:1878.0px;top:518.78px;font-size:24px;font-weight:400;letter-spacing:-0.3px;color:#bbbbbb;">Version</div>
<div class="t" style="left:2350.0px;top:518.78px;font-size:24px;font-weight:400;letter-spacing:-0.3px;color:#bbbbbb;">Latest version</div>
<div class="a" style="left:1392px;top:556px;width:1411px;height:40px;background:#3f4244;"></div>
<div class="t" style="left:1398.9px;top:564.14px;font-size:27px;font-weight:400;letter-spacing:1.2px;color:#bbbbbb;">pip</div>
<div class="t" style="left:1868.5px;top:564.14px;font-size:27px;font-weight:400;letter-spacing:-0.1px;color:#bbbbbb;">21.0.1</div>
<div class="t" style="left:2341.0px;top:564.14px;font-size:27px;font-weight:400;letter-spacing:-0.1px;color:#bbbbbb;">21.0.1</div>
<div class="t" style="left:1398.9px;top:604.14px;font-size:27px;font-weight:400;letter-spacing:1.2px;color:#bbbbbb;">setuptools</div>
<div class="t" style="left:1868.5px;top:604.14px;font-size:27px;font-weight:400;letter-spacing:0.6px;color:#bbbbbb;">54.1.0</div>
<div class="t" style="left:2341.0px;top:604.14px;font-size:27px;font-weight:400;letter-spacing:0.6px;color:#bbbbbb;">54.1.0</div>
<div class="a" style="left:1392px;top:1542px;width:1411px;height:2px;background:#2f3133;"></div>
<div class="a" style="left:1392px;top:1544px;width:1411px;height:48px;background:#3c3f41;"></div>
<svg style="left:1408px;top:1558px" width="20" height="20" viewBox="0 0 20 20"><path d="M10 0v20M0 10h20" stroke="#afb1b3" stroke-width="3.2"/></svg>
<div class="a" style="left:1460px;top:1566px;width:20px;height:4px;background:#5c5e60;"></div>
<svg style="left:1510px;top:1561px" width="24" height="12" viewBox="0 0 24 12"><path d="M0 12L12 0l12 12z" fill="#5c5e60"/></svg>
<svg style="left:1560px;top:1557px" width="28" height="22" viewBox="0 0 28 22"><path d="M0 11C4 3 9 0 14 0s10 3 14 11c-4 8-9 11-14 11S4 19 0 11z" fill="#afb1b3"/><circle cx="14" cy="11" r="6" fill="#3c3f41"/><circle cx="14" cy="11" r="3.2" fill="#afb1b3"/></svg>
<div class="a" style="left:877px;top:1651px;width:46px;height:46px;background:#46494b;border:2px solid #5b5e60;border-radius:50%"></div>
<div class="t" style="left:890.5px;top:1659.07px;font-size:33px;font-weight:400;letter-spacing:0px;color:#c0c0c0;">?</div>
<div class="a" style="left:2332px;top:1650px;width:144px;height:48px;background:#4c5052;border:2px solid #5e6060;border-radius:7px;box-shadow:0 2px 2px rgba(0,0,0,.2)"></div>
<div class="t" style="left:2363.0px;top:1661.84px;font-size:27px;font-weight:400;letter-spacing:0.85px;color:#bbbbbb;">Cancel</div>
<div class="a" style="left:2500px;top:1650px;width:144px;height:48px;background:#4c5052;border:2px solid #5e6060;border-radius:7px;box-shadow:0 2px 2px rgba(0,0,0,.2)"></div>
<div class="t" style="left:2537.0px;top:1661.84px;font-size:27px;font-weight:400;letter-spacing:0.85px;color:#bbbbbb;">Apply</div>
<div class="a" style="left:2668px;top:1650px;width:144px;height:48px;background:#365880;border:2px solid #4c708c;border-radius:7px"></div>
<div class="t" style="left:2722.8px;top:1661.84px;font-size:27px;font-weight:400;letter-spacing:0.85px;color:#bbbbbb;">OK</div>
<div class="a" style="left:848px;top:276px;width:1993px;height:1443px;border-radius:10px;border:1px solid rgba(255,255,255,.18);border-top-color:rgba(255,255,255,.35)"></div>
<div class="a" style="left:3132px;top:26px;width:572px;height:104px;background:#f3f3f3;border-radius:12px;overflow:hidden;box-shadow:0 8px 40px rgba(0,0,0,.35)"><div class="a" style="left:0;top:0;width:572px;height:43px;background:#e2e2e2;border-bottom:1px solid #d4d4d4"></div><div class="a" style="left:34px;top:10px;width:24px;height:24px;border-radius:50%;background:#dcdcdc;border:1px solid #c9c9c9"></div></div>
<svg style="left:3166px;top:86px" width="28" height="28" viewBox="0 0 28 28"><path d="M1 1l26 10-10 3-5 10z" stroke="#555555" stroke-width="2.8" fill="none" stroke-linejoin="miter"/><path d="M17 14l10 10" stroke="#555555" stroke-width="2.8"/></svg>
<svg style="left:3236px;top:86px" width="50" height="28" viewBox="0 0 50 28"><path d="M2 27v-7L17 4l7 7L9 27z M9 27h20" stroke="#555555" stroke-width="2.8" fill="none"/><path d="M40 12l5 5 5-5" stroke="#555555" stroke-width="2.8" fill="none"/></svg>
<svg style="left:3325px;top:86px" width="50" height="28" viewBox="0 0 50 28"><rect x="1.5" y="1.5" width="25" height="25" stroke="#555555" stroke-width="2.8" fill="none"/><path d="M37 12l5 5 5-5" stroke="#555555" stroke-width="2.8" fill="none"/></svg>
<svg style="left:3414px;top:86px" width="28" height="28" viewBox="0 0 28 28"><path d="M1 6V2h26v4M14 2v25M8 27h12" stroke="#555555" stroke-width="2.8" fill="none"/></svg>
<svg style="left:3485px;top:84px" width="32" height="32" viewBox="0 0 32 32"><path d="M2 15L17 1l13 13-15 15z" stroke="#555555" stroke-width="2.8" fill="none" stroke-linejoin="miter"/><path d="M0 29.5h31" stroke="#555555" stroke-width="2.8"/></svg>
<svg style="left:3562px;top:86px" width="28" height="28" viewBox="0 0 28 28"><path d="M8 1L2 8l7 6" stroke="#555555" stroke-width="2.8" fill="none"/><path d="M2 8h17a8 8 0 0 1 0 16H3" stroke="#555555" stroke-width="2.8" fill="none"/></svg>
<svg style="left:3630px;top:85px" width="30" height="31" viewBox="0 0 30 31"><path d="M0 5h30M11 4V1h8v3 M5 5v24h20V5 M12 13v8M18 13v8" stroke="#555555" stroke-width="2.8" fill="none"/></svg>
</body></html>
